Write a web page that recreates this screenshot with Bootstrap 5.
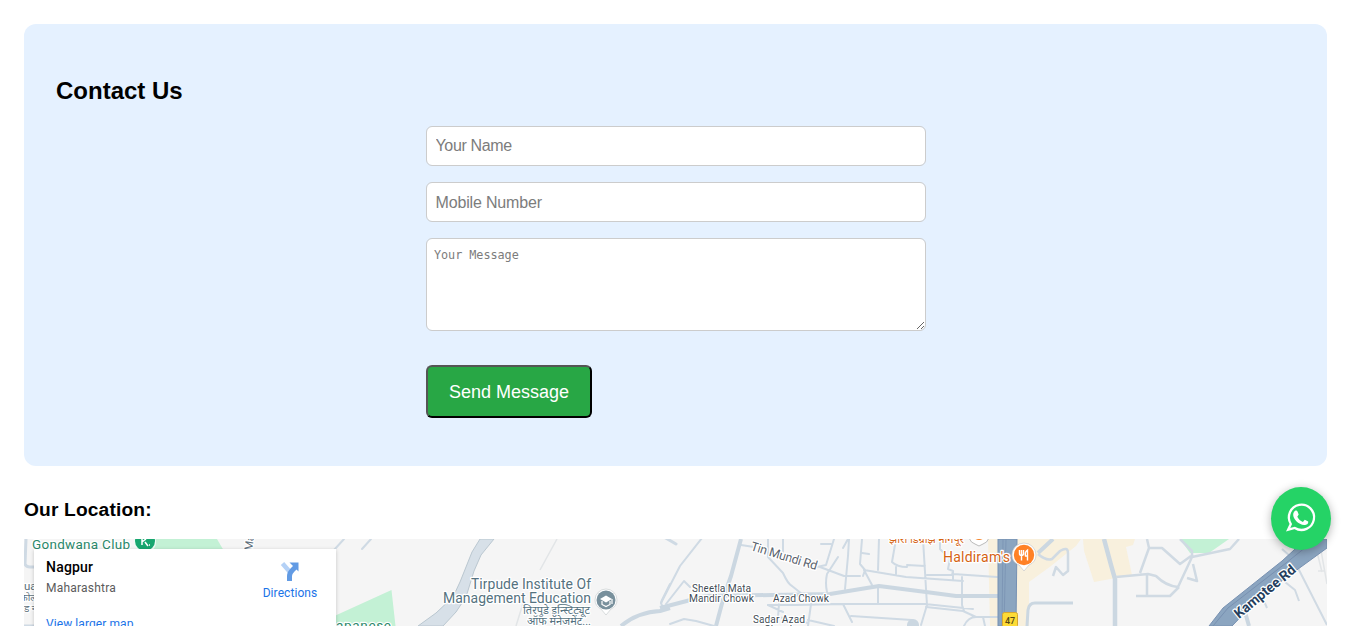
<!DOCTYPE html>
<html lang="en">
<head>
<meta charset="utf-8">
<meta name="viewport" content="width=device-width, initial-scale=1">
<title>Contact Us</title>
<link href="https://cdn.jsdelivr.net/npm/bootstrap@5.3.0/dist/css/bootstrap.min.css" rel="stylesheet">
<style>
  body { font-family: "Liberation Sans", Arial, sans-serif; color: #000; height: 626px; overflow: hidden; }
  .page { padding: 24px 20px 0 24px; }
  .contact-panel { background: #e5f1ff; border-radius: 12px; height: 442px; padding: 53px 32px 0; }
  .contact-panel h2 { font-size: 24px; line-height: 28px; margin-bottom: 21px; }
  .contact-form { width: 500px; margin-left: 370px; gap: 16px; }
  .contact-form .form-control { border: 1px solid #ccc; border-radius: 6px; padding: 0 8.5px; height: 40px; font-size: 16px; color: #000; letter-spacing: -.16px; }
  .contact-form .form-control::placeholder { color: #7c7c7c; }
  .contact-form input.your-name { letter-spacing: -.36px; }
  .contact-form input.your-mobile { padding-top: 2px; }
  .contact-form textarea.form-control { height: 93px; min-height: 0; padding: 8px 7px; font: 11.8px/17px "DejaVu Sans Mono", monospace; letter-spacing: -.04px; }
  .send { width: 166px; height: 53px; margin-top: 18px; background: #28a745; color: #fff; font-size: 18px; border: 2px outset #000; border-color: #555 #000 #000 #555; border-radius: 6px; padding: 2px 0 0; }
  .location-title { font-size: 19.2px; line-height: 22px; letter-spacing: .15px; margin: 33px 0 18px; }
  .map-frame { height: 87px; overflow: hidden; background: #f5f5f5; }
  .map-art { display: block; font-family: Roboto, "Noto Sans", sans-serif; }
  .halo { paint-order: stroke; stroke: #fff; stroke-width: 2.5px; stroke-linejoin: round; }
  .place-card { left: 10px; top: 10px; width: 302px; height: 110px; background: #fff; box-shadow: 0 1px 4px rgba(0,0,0,.2); font-family: Roboto, sans-serif; font-size: 12px; line-height: 16px; padding: 10px 12px; }
  .place-card a { color: #1a73e8; text-decoration: none; letter-spacing: .08px; }
  .place-name { font-size: 14px; font-weight: 500; letter-spacing: .2px; }
  .place-region { color: #5b5b5b; margin-top: 5px; letter-spacing: .22px; }
  .place-larger { margin-top: 20px; }
  .directions { width: 68px; padding-top: 2px; }
  .directions svg { position: relative; left: 0; }
  .wa-button { left: 1271px; top: 487px; width: 60px; height: 63px; border-radius: 50%; background: #25d366; box-shadow: 0 2px 10px rgba(0,0,0,.3); }
</style>
</head>
<body>
<main class="page">
  <section class="contact-panel">
    <h2 class="fw-bold">Contact Us</h2>
    <form class="contact-form d-flex flex-column align-items-start">
      <input class="form-control your-name" type="text" placeholder="Your Name">
      <input class="form-control your-mobile" type="tel" placeholder="Mobile Number">
      <textarea class="form-control" placeholder="Your Message"></textarea>
      <button class="send" type="button">Send Message</button>
    </form>
  </section>
  <h3 class="location-title fw-bold">Our Location:</h3>
  <section class="map-frame position-relative">
    <svg class="map-art" width="1303" height="87" viewBox="24 539 1303 87">
      <!-- parks and commercial areas -->
      <g fill="#c3f1d5">
        <path d="M150 539h67l7 12h-80zM330 626v-8l61.500-28 4 36zM1180 539h49l-20 14h-19z"/>
      </g>
      <g fill="#f8f0dd">
        <path d="M988 539h10v87h-8zM1016 539h65l-5 7-25 20-22 16v44h-13z"/>
        <path d="M1083 539h52l-2 6-7 2 6 28-38 7-10-31z"/>
      </g>
      <!-- canal -->
      <path d="M480 539h14l-13 16-7 16-8 26-10 15-13 14h-25l18-13 17-16 7-15 12-30z" fill="#d7e0e8" stroke="#bac7d0"/>
      <g fill="none" stroke="#cfdae4" stroke-width="2" stroke-linejoin="round" stroke-linecap="round">
        <path d="M26 539l-1 25q1 3 5 3h4M36 546v8M24 626h10" stroke-width="3"/>
        <path d="M344 539l-10 11M371 539l-9 10"/>
        <path d="M670 584l-8 16q-3 6 5 8"/>
        <path d="M664 537l12 7" stroke-width="3"/>
        <path d="M702 538l-22 28-19 37M666 604l18-23 6 6"/>
        <path d="M741 545l13 2M768 539v18l15 16q5 11 9 13l10 8M783 539v13"/>
        <path d="M834 539l-8 26-9 2M821 544h10M848 539l-5 9M838 557l-11 17q-2 9 0 18M849 539l-1 17-3 33"/>
        <path d="M820 567l24 9 16 0M862 539l-2 25 5 6-2 6M862 553l7 1M879 539l-1 31M864 570l42 7 57 4M864 570l8 15M896 539l-4 23q5 5 15 5M907 565l18 1M896 567v7M923 539l4 66-6 20M940 539v10l10 10-2 10 5 2v9M927 575h25l1-4M953 574l44 3M962 577v28l2 6M878 586v17M831 604h94l48 5M843 604l9 18M851 616l61 4M768 605h28l47-1"/>
        <path d="M768 605l15 7M811 604l-3 22M779 604l-1 13 30 6M926 607l37 4 13 6 22 0M983 617l2 9M976 617q-8 0-12 9M808 620l26 6"/>
        <path d="M670 624l14-5 12 2 18 5"/>
      </g>
      <g fill="none" stroke="#cbd7e1" stroke-width="4" stroke-linejoin="round">
        <path d="M741 539l-10 37-7 20-8 30M660 608l19-5 27-7 66-1 58-1 49-8 47 6 30 4h42M621 626q17-14 39-15l10-3"/>
        <path d="M1104 539l7 26 4 14v47" stroke-width="4.500"/><path d="M1027 626l1-16q1-7 7-7h38" stroke-width="3"/>
        <path d="M1053 539l-15 14M1245 612l4 14" stroke-width="4"/>
      </g>
      <circle cx="913" cy="625" r="6" fill="#cbd7e1"/>
      <g fill="none" stroke="#d0dae3" stroke-width="2.500" stroke-linejoin="round">
        <path d="M1038 554q8 7 14 5l8-8q8-5 8 2v18l-5 4-7-8-3 9M1147 539l2 9-9 25M1116 577l32-3 8 2q10 10 22 11l14-30v-6l-12-12M1149 548h13l18 16 11-8M1192 557l38-8 9-10M1193 564l4 17-10-3M1147 575v20M1136 596h34l9-9"/>
        <path d="M1297 566l30 59M1285 582l10 8 4 11M1264 601l3 7M1290 556l-8-7" stroke-width="2"/>
      </g>
      <path d="M557 539l-17 31M525 597l-9 29M1319 539l8 45M1316 548l6 24M1318 571h7" stroke="#e2e5e7" stroke-width="1.500" fill="none"/>
      <!-- arterial roads -->
      <path d="M998 539h19l-1 87h-18z" fill="#8ba5c0" stroke="#7590b2"/><path d="M1003 539l-1 87M1006 539l-2 87" stroke="#7d96b5"/>
      <path d="M1209 626l14-18 59-47 24-22h21v9l-66 48-29 30z" fill="#8ba5c0" stroke="#7891b1"/><path d="M1213 626l15-18 58-45 30-24" fill="none" stroke="#7891b1"/>
      <!-- place labels -->
      <g class="halo" font-size="13.500" fill="#2b886b">
        <text x="32" y="549" textLength="98">Gondwana Club</text><text x="336" y="630" textLength="55">apanese</text>
      </g>
      <circle cx="145" cy="542" r="11" fill="#eefbf5"/><circle cx="145" cy="541" r="10" fill="#18a66f"/><path d="M142 539v6M142 542l4-3M145 542l3 4M149 545h1" stroke="#fff" stroke-width="1.500"/>
      <g class="halo" font-size="11.500" fill="#5c6f7b"><text x="24" y="590">ua</text><text x="20" y="601" font-size="10">कोल</text><text x="24" y="612" font-size="10">ड न</text><text transform="translate(252 551) rotate(-82)" font-size="11">Ma</text></g>
      <g class="halo" fill="#557280" font-size="14">
        <text x="471" y="589" textLength="120">Tirpude Institute Of</text><text x="443" y="603" textLength="148">Management Education</text>
        <g font-size="11.500"><text x="523" y="614" textLength="67" lengthAdjust="spacingAndGlyphs">तिरपुडे इन्स्टिट्यूट</text><text x="527" y="625" textLength="64" lengthAdjust="spacingAndGlyphs">ऑफ मॅनेजमेंट...</text></g>
      </g>
      <path d="M595 600a11 11 0 1 1 22 0q0 6-6 9l-5 6-5-6q-6-3-6-9z" fill="#fff" stroke="#c9ced0" stroke-width=".7"/><circle cx="606" cy="600" r="9.500" fill="#78909c"/><path d="M600 599l6-3.500 6 3.500-6 3.500z" fill="#fff"/><path d="M602 601v3.500l4 2 4-2v-3.500M612 599v5" fill="none" stroke="#fff" stroke-width="1.200"/>
      <g class="halo" font-size="10.300" fill="#414b54">
        <text x="692" y="592" textLength="59">Sheetla Mata</text><text x="689" y="602" textLength="65">Mandir Chowk</text><text x="773" y="602" textLength="56">Azad Chowk</text><text x="753" y="623" textLength="52">Sadar Azad</text><text x="764" y="633" textLength="31">Chowk</text>
      </g>
      <text class="halo" transform="translate(750 550) rotate(17)" font-size="12.500" fill="#5b646e" textLength="69">Tin Mundi Rd</text>
      <g class="halo" fill="#d56313"><text x="889" y="543" font-size="11" textLength="75" lengthAdjust="spacingAndGlyphs">झारा डिग्रोझ नागपूर</text><text x="943" y="562" font-size="14" textLength="67">Haldiram's</text></g>
      <path d="M969 538q2 5 6 6l4 2 4-2q4-1 6-6z" fill="#fff" stroke="#bbb"/><path d="M974 538q5 4 10 0z" fill="#f58226"/>
      <path d="M1012 555a12 12 0 1 1 24 0q0 7-7 10l-5 6-5-6q-7-3-7-10z" fill="#fff" stroke="#c8c8c8" stroke-width=".7"/><circle cx="1024" cy="555" r="10.200" fill="#ff8126"/><path d="M1019.500 550v3.500q0 2 2 2t2-2V550M1021.500 550v10.500M1027.500 560.500V550q-3 2-2 6h2" fill="none" stroke="#fff" stroke-width="1.400"/>
      <rect x="1002.500" y="612.500" width="15" height="15" rx="2" fill="#fddb35" stroke="#d7a730"/><text x="1005" y="624" font-size="9" font-weight="500" fill="#554818">47</text>
      <text class="halo" transform="translate(1239 619) rotate(-39.500)" font-size="14" font-weight="700" fill="#263f5e" textLength="75">Kamptee Rd</text>
    </svg>
    <aside class="place-card position-absolute d-flex justify-content-between">
      <div><div class="place-name">Nagpur</div><div class="place-region">Maharashtra</div><div class="place-larger"><a href="#">View larger map</a></div></div>
      <a class="directions text-center" href="#">
        <svg class="d-block mx-auto" width="20" height="20" viewBox="0 0 20 20"><path d="M2.500 2.500l7 8" stroke="#b4d1f6" stroke-width="4.500"/><path d="M9.500 20v-5q0-3 3-6l4-4" fill="none" stroke="#629be4" stroke-width="5"/><path d="M9.500 1.500h9v9z" fill="#629be4"/></svg>
        <span class="d-block mt-1">Directions</span>
      </a>
    </aside>
  </section>
</main>
<a class="wa-button position-fixed" href="#" aria-label="WhatsApp">
  <svg width="60" height="63" viewBox="0 0 60 63"><g transform="translate(-.2 -.5)"><path d="M20 37.500A12.600 12.600 0 1 1 24 41.500L17.300 43.200z" fill="none" stroke="#fff" stroke-width="2.300"/><path d="M23.200 25.500c1.500-2.200 3-1.700 3.500-.5l1.200 3-1.400 2.200c1.400 2.700 3 4 5.600 5.200l1.900-2.100 3.400 1.700c.4 2.400-2 3.700-4 3.600-5.700-.6-11.500-6.300-11-10.900.1-.9.300-1.600.8-2.200z" fill="#fff"/></g></svg>
</a>
<script src="https://cdn.jsdelivr.net/npm/bootstrap@5.3.0/dist/js/bootstrap.bundle.min.js"></script>
</body>
</html>
